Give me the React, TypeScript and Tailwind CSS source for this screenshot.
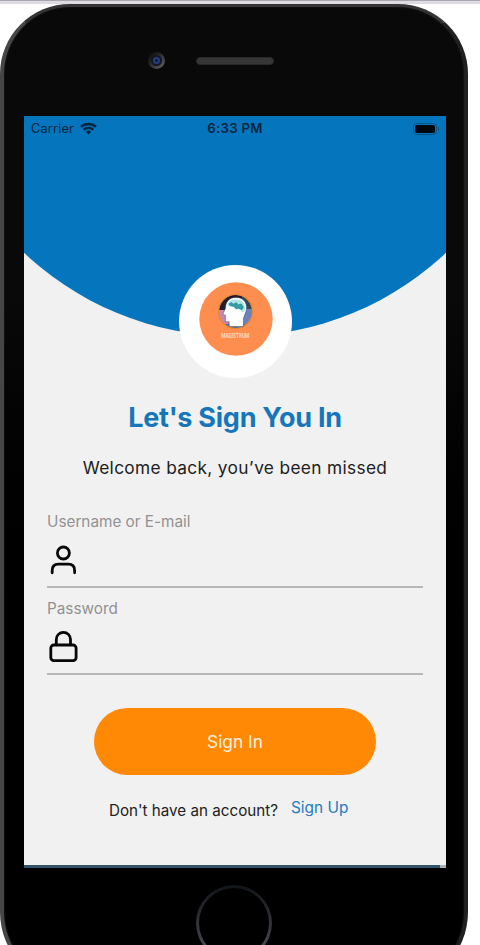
import React from "react";

const Wifi = () => (
  <svg width="17" height="13" viewBox="0 0 17 13" fill="none" stroke="#062640" strokeWidth="2.4">
    <path d="M1 4.9C5 1 12 1 16 4.9" />
    <path d="M3.6 7.8c2.7-2.6 7.1-2.6 9.8 0" />
    <path d="M5.9 9.7a3.8 3.8 0 0 1 5.2 0L8.5 12.6z" fill="#062640" stroke="none" />
  </svg>
);

const UserIcon = () => (
  <svg className="mt-[5px] ml-[3px]" width="28" height="32" viewBox="0 0 28 32" fill="none" stroke="#080808" strokeWidth="2.8" strokeLinecap="round">
    <circle cx="13.4" cy="8" r="6" />
    <path d="M2.2 27.8v-2.4c0-4 2.4-6.3 6.2-6.3h10c3.8 0 6.2 2.3 6.2 6.3v2.4" />
  </svg>
);

const LockIcon = () => (
  <svg className="mt-[3px] ml-[2px]" width="30" height="34" viewBox="0 0 30 34" fill="none" stroke="#080808" strokeWidth="2.8" strokeLinecap="round">
    <rect x="1.8" y="15" width="25.3" height="15.6" rx="3" />
    <path d="M7.3 14.8V9.4a7.1 7.1 0 0 1 14.2 0v5.4" />
  </svg>
);

const Logo = () => (
  <svg width="74" height="74" viewBox="0 0 74 74">
    <circle cx="37" cy="37" r="36.7" fill="#fe8e50" />
    <defs>
      <clipPath id="disc">
        <circle cx="36.5" cy="29.5" r="16.6" />
      </clipPath>
    </defs>
    <g clipPath="url(#disc)">
      <rect x="19" y="12" width="36" height="16" fill="#211d31" />
      <rect x="19" y="28" width="20" height="19" fill="#c987b2" />
      <path d="M38 26h17v21H38z" fill="#6c80bd" />
      <path d="M43 14h12v13H43z" fill="#354a50" />
      <path d="M25 42h25v5H25z" fill="#526b9f" />
    </g>
    <circle cx="36.5" cy="29.5" r="17" fill="none" stroke="#e0892f" strokeWidth="1.2" />
    <path d="M30.2 44.6v-4.8h-3.8v-6.6l-2.7-.7 2.8-6.3c0-6.8 4.3-10.8 10.5-10.8 6.8 0 10.6 4.6 10.6 10.3 0 5-2.8 7.5-3.2 11.4v7.5z" fill="#fff" stroke="#35405a" strokeWidth=".5" />
    <path d="M28.6 23.9c-.4-4.7 3.6-6.6 8.4-6.5 5.4 0 9 3.2 9.1 8.5-.1 3-1.2 4-3.3 4l-1.3-2.4h-4.8l-2.1-2.5z" fill="#aee5e4" />
    <path d="M30 22l2.3-1.4 2.2 1.7 2.6-1.6 2.4 2.2 2.6-.9 2.1 3-1.4 2.7-3.4-1.8-2.4.8-2-2.4-3.5-.6z" fill="#369da6" stroke="#258b97" strokeWidth=".8" />
    <text x="36.2" y="56.3" textAnchor="middle" textLength="28" lengthAdjust="spacingAndGlyphs" fontSize="8" fontWeight="500" fill="#ffe0cb" fontFamily="Roboto, sans-serif">MAGISTRUM</text>
  </svg>
);

function Field({ label, icon }: { label: string; icon: React.ReactNode }) {
  return (
    <div className="mb-[9px] flex h-[78px] flex-col border-b-2 border-[#b7b7b7]">
      <label className="h-[30px] text-[15.3px] leading-[23px] text-[#929292]">{label}</label>
      {icon}
    </div>
  );
}

export default function App() {
  return (
    <main className="h-[945px] w-[480px] overflow-hidden bg-white font-['Inter',sans-serif]">
      <div className="h-1 border-y border-t-[#aaa7aa] border-b-[#dcd8e2] bg-[#dedbe3]" />
      <div className="h-[983px] w-[468px] rounded-t-[70px] rounded-b-[75px] border-4 border-t-[3px] border-l-[#454747] border-r-[#222120] border-t-[#343434] border-b-[#333] bg-linear-to-b from-[#090909] from-30% to-black to-70% shadow-[inset_0_0_2px_#282828]">
        <header className="flex h-[109px] items-center pl-[144px]">
          <div className="mt-[-3px] flex size-[17px] items-center justify-center rounded-full bg-linear-to-br from-[#151515] from-20% to-[#686868]">
            <div className="flex size-[11px] items-center justify-center rounded-full bg-[#141823]">
              <div className="size-[7px] rounded-full border-2 border-[#233f82] bg-[#101b3b]" />
            </div>
          </div>
          <div className="mt-[-1px] ml-[31px] h-2 w-[78px] rounded-full border border-[#292929] bg-[#363636]" />
        </header>

        <section className="ml-5 flex h-[752px] w-[422px] flex-col bg-[#f1f1f1]">
          <div className="relative h-[262px]">
            <svg className="absolute inset-0" width="422" height="262" viewBox="0 0 422 262">
              <circle cx="211" cy="-87.5" r="308" fill="#0575bd" />
            </svg>
            <div className="relative grid h-[25px] grid-cols-3 items-center pr-[7px] pl-[7px] text-[12.8px] text-[#062640]">
              <div className="flex items-center gap-[6px]">
                <span className="tracking-[0.15px]">Carrier</span>
                <Wifi />
              </div>
              <span className="text-center text-[13.2px] font-semibold tracking-[0.3px]">6:33 PM</span>
              <div className="flex items-center justify-end">
                <div className="h-[12px] w-[24px] rounded-[4px] border border-[#075384] p-[1px]">
                  <div className="h-full rounded-[2px] bg-[#01070d]" />
                </div>
                <div className="ml-[1px] h-1 w-[1px] rounded-r bg-[#075384]" />
              </div>
            </div>
            <div className="relative mt-[124px] ml-[155px] flex size-[113px] items-center justify-center rounded-full bg-white pb-[5px]">
              <Logo />
            </div>
          </div>

          <h1 className="mt-[20px] text-center text-[27px] leading-10 font-bold tracking-[-0.25px] text-[#1576ba]">Let's Sign You In</h1>
          <p className="mt-[17px] text-center text-[17.3px] leading-[26px] tracking-[0.34px] text-[#202020]">Welcome back, you’ve been missed</p>

          <form className="mx-[23px] mt-[29px] w-[376px]">
            <Field label="Username or E-mail" icon={<UserIcon />} />
            <Field label="Password" icon={<LockIcon />} />
            <button type="button" className="mt-[24px] ml-[47px] h-[67px] w-[282px] rounded-full bg-[#ff8804] text-[17.3px] text-[#fff0dc]">Sign In</button>
          </form>
          <div className="mt-[21px] ml-[85px] flex items-start leading-6">
            <span className="mt-[3px] w-[182px] text-[15.2px] whitespace-nowrap text-[#222]">Don't have an account?</span>
            <a className="text-[15.4px] whitespace-nowrap text-[#257bbd]">Sign Up</a>
          </div>
          <div className="mt-auto flex h-[3px] bg-[#315469]">
            <div className="ml-auto w-[6px] bg-[#a9b0b4]" />
          </div>
        </section>
        <footer className="mt-[17px] ml-[192px] size-[76px] rounded-full bg-linear-to-b from-[#111417] to-[#55555e] p-[3px]">
          <div className="size-full rounded-full bg-black" />
        </footer>
      </div>
    </main>
  );
}
